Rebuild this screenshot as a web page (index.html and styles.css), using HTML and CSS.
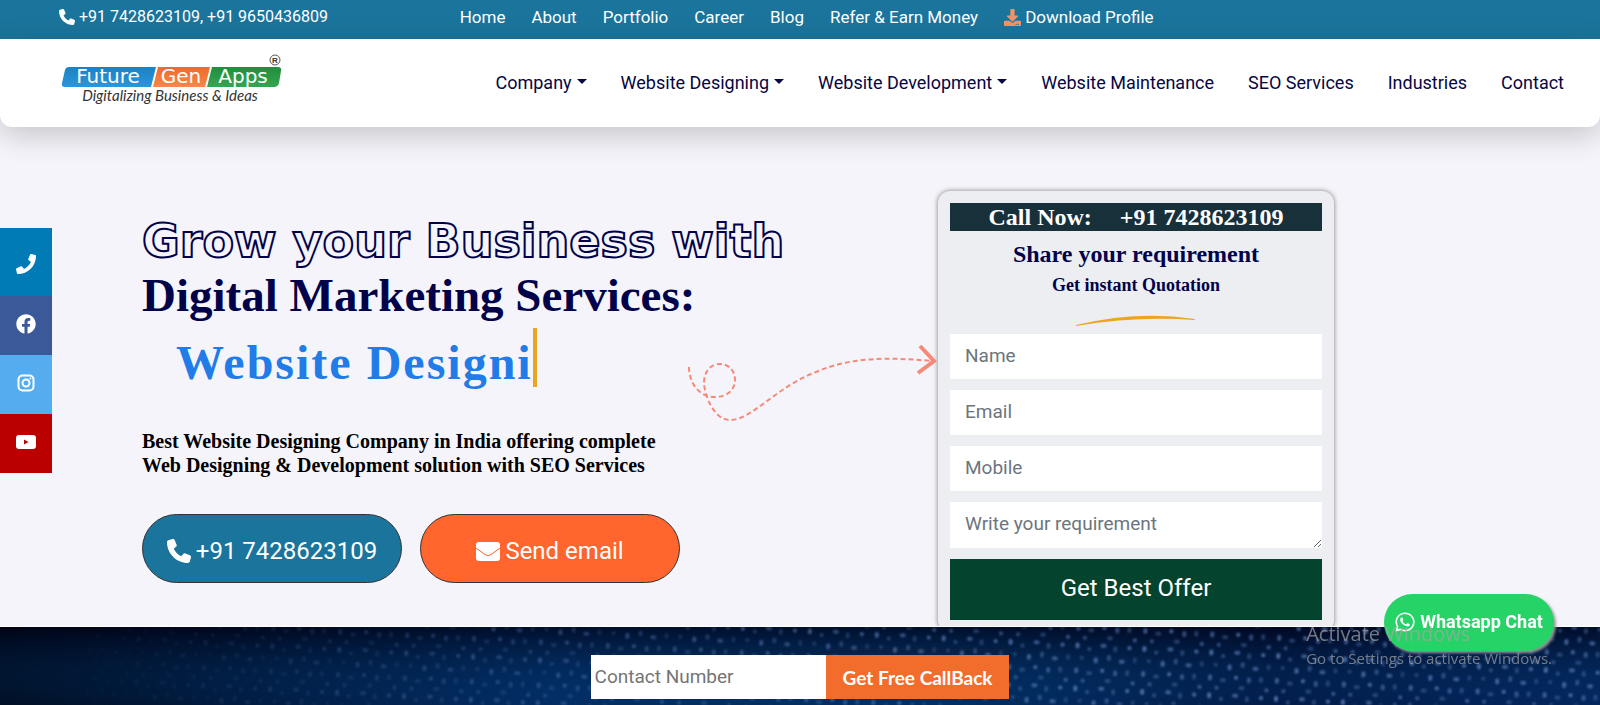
FILE: index.html
```html
<!DOCTYPE html>
<html lang="en">
<head>
  <meta charset="UTF-8">
  <meta name="viewport" content="width=device-width, initial-scale=1.0">
  <title>Future Gen Apps</title>
  <link rel="stylesheet" href="styles.css">
</head>
<body>
  <!-- shared icons -->
  <svg class="sprite" aria-hidden="true">
    <symbol id="phone" viewBox="0 0 512 512"><path d="M164.9 24.6c-7.7-18.6-28-28.5-47.4-23.2l-88 24C12.1 30.2 0 46 0 64C0 311.4 200.6 512 448 512c18 0 33.8-12.1 38.6-29.5l24-88c5.3-19.4-4.6-39.7-23.2-47.4l-96-40c-16.3-6.8-35.2-2.1-46.3 11.6L304.7 368C234.3 334.7 177.3 277.7 144 207.3L193.3 167c13.7-11.2 18.4-30 11.6-46.3l-40-96z"/></symbol>
  </svg>

  <div class="topbar">
    <a class="topbar-phone" href="#"><svg class="icon" aria-hidden="true"><use href="#phone"/></svg> +91 7428623109, +91 9650436809</a>
    <nav class="topbar-links">
      <a href="#">Home</a>
      <a href="#">About</a>
      <a href="#">Portfolio</a>
      <a href="#">Career</a>
      <a href="#">Blog</a>
      <a href="#">Refer &amp; Earn Money</a>
      <a href="#"><svg class="icon icon-download" viewBox="0 0 512 512" aria-hidden="true"><path d="M216 0h80c13.3 0 24 10.7 24 24v168h87.7c17.8 0 26.7 21.5 14.1 34.1L269.7 378.3c-7.5 7.5-19.8 7.5-27.3 0L90.1 226.1c-12.6-12.6-3.7-34.1 14.1-34.1H192V24c0-13.3 10.7-24 24-24zm296 376v112c0 13.3-10.7 24-24 24H24c-13.3 0-24-10.7-24-24V376c0-13.3 10.7-24 24-24h146.7l49 49c20.1 20.1 52.5 20.1 72.6 0l49-49H488c13.3 0 24 10.7 24 24zm-124 88c0-11-9-20-20-20s-20 9-20 20 9 20 20 20 20-9 20-20zm64 0c0-11-9-20-20-20s-20 9-20 20 9 20 20 20 20-9 20-20z"/></svg> Download Profile</a>
    </nav>
  </div>

  <header class="header">
    <a class="logo" href="#" aria-label="Future Gen Apps">
      <svg width="224" height="52" viewBox="0 0 224 52">
        <defs>
          <linearGradient id="blue" x1="0" y1="0" x2="0" y2="1"><stop offset="0" stop-color="#1a82c4"/><stop offset="1" stop-color="#2b96dc"/></linearGradient>
          <linearGradient id="orange" x1="0" y1="0" x2="0" y2="1"><stop offset="0" stop-color="#ee6a2c"/><stop offset="1" stop-color="#f9864a"/></linearGradient>
          <linearGradient id="green" x1="0" y1="0" x2="0" y2="1"><stop offset="0" stop-color="#1f8f3d"/><stop offset="1" stop-color="#35a552"/></linearGradient>
        </defs>
        <path fill="url(#blue)" d="M8 13H95L90 33H4Q0 33 1 29L4 16Q5 13 8 13Z"/>
        <path fill="url(#orange)" d="M97 13H149L144 33H92Z"/>
        <path fill="url(#green)" d="M151 13H217Q221 13 220 17L218 29Q217 33 213 33H146Z"/>
        <g class="logo-name">
          <text x="47" y="29">Future</text>
          <text x="120" y="29">Gen</text>
          <text x="182" y="29">Apps</text>
        </g>
        <circle cx="214" cy="6" r="5" fill="#fff" stroke="#555" stroke-width="1"/>
        <text class="logo-mark" x="214" y="9">R</text>
        <text class="logo-tagline" x="109" y="47">Digitalizing Business &amp; Ideas</text>
      </svg>
    </a>
    <nav class="menu">
      <a class="has-menu" href="#">Company</a>
      <a class="has-menu" href="#">Website Designing</a>
      <a class="has-menu" href="#">Website Development</a>
      <a href="#">Website Maintenance</a>
      <a href="#">SEO Services</a>
      <a href="#">Industries</a>
      <a href="#">Contact</a>
    </nav>
  </header>

  <main>
    <section class="hero">
      <div class="hero-text">
        <h1>
          <span class="outline">Grow your Business with</span>
          Digital Marketing Services:
        </h1>
        <div class="typed">Website Designi</div>
        <p>Best Website Designing Company in India offering complete<br>Web Designing &amp; Development solution with SEO Services</p>
        <div class="actions">
          <a class="pill pill-call" href="#"><svg class="icon" aria-hidden="true"><use href="#phone"/></svg> +91 7428623109</a>
          <a class="pill pill-mail" href="#"><svg class="icon" viewBox="0 0 24 24" aria-hidden="true"><rect x="0" y="3" width="24" height="19" rx="3"/><path fill="none" stroke="#ff652c" d="M0 9L9 15.500Q12 18 15 15.500L24 9"/></svg> Send email</a>
        </div>
      </div>

      <div class="card">
        <svg class="arrow" width="252" height="90" viewBox="0 0 252 90" fill="none" stroke="#f58a78" aria-hidden="true">
          <path stroke-width="2" stroke-dasharray="5 3" d="M3 27C3 43 13 57 29 57C42 57 49 49 49 40C49 30 42 24 34 24C25 24 18 31 18 43C19 58 29 80 44 80C66 80 90 47 130 32C165 17 200 17 246 21"/>
          <path stroke-width="4" d="M234 6L248 21L232 33"/>
        </svg>
        <form class="quote">
          <div class="call-now"><span>Call Now:</span><span>+91 7428623109</span></div>
          <h2>Share your requirement</h2>
          <h3>Get instant Quotation</h3>
          <svg class="swoosh" width="120" height="12" viewBox="0 0 120 12" aria-hidden="true"><path fill="#eda51f" d="M0 10Q62 -5 119 4L118 5Q60 1 0 11Z"/></svg>
          <input type="text" name="name" placeholder="Name" aria-label="Name">
          <input type="email" name="email" placeholder="Email" aria-label="Email">
          <input type="tel" name="mobile" placeholder="Mobile" aria-label="Mobile">
          <textarea name="requirement" placeholder="Write your requirement" aria-label="Write your requirement"></textarea>
          <button type="button">Get Best Offer</button>
        </form>
      </div>
    </section>

    <section class="callback">
      <svg class="callback-bg" aria-hidden="true">
        <defs>
          <linearGradient id="base" x1="0" y1="0" x2="1" y2="0">
            <stop offset="0" stop-color="#00030f"/>
            <stop offset="0.150" stop-color="#011130"/>
            <stop offset="0.350" stop-color="#03265a"/>
            <stop offset="0.600" stop-color="#032858"/>
            <stop offset="0.800" stop-color="#03123a"/>
            <stop offset="1" stop-color="#041f52"/>
          </linearGradient>
          <linearGradient id="shade" x1="0" y1="0" x2="0" y2="1">
            <stop offset="0" stop-color="#000418" stop-opacity="0.700"/>
            <stop offset="1" stop-color="#00539a" stop-opacity="0.150"/>
          </linearGradient>
          <linearGradient id="fade" x1="0" y1="0" x2="1" y2="0">
            <stop offset="0.030" stop-color="#000"/>
            <stop offset="0.300" stop-color="#888"/>
            <stop offset="0.700" stop-color="#fff"/>
          </linearGradient>
          <filter id="soft"><feGaussianBlur stdDeviation="1"/></filter>
          <pattern id="dots" width="67" height="43" patternUnits="userSpaceOnUse" patternTransform="rotate(3)">
            <g fill="#6d92cf">
              <ellipse cx="5" cy="5" rx="2" ry="3"/>
              <ellipse cx="17" cy="8" rx="2" ry="2" opacity="0.600"/>
              <ellipse cx="31" cy="4" rx="3" ry="2" opacity="0.800"/>
              <ellipse cx="43" cy="7" rx="2" ry="3" opacity="0.500"/>
              <ellipse cx="57" cy="5" rx="2" ry="2"/>
              <ellipse cx="10" cy="17" rx="2" ry="2" opacity="0.500"/>
              <ellipse cx="24" cy="19" rx="2" ry="3" opacity="0.900"/>
              <ellipse cx="37" cy="16" rx="2" ry="3" opacity="0.600"/>
              <ellipse cx="50" cy="19" rx="3" ry="2" opacity="0.800"/>
              <ellipse cx="63" cy="17" rx="2" ry="3" opacity="0.400"/>
              <ellipse cx="5" cy="30" rx="2" ry="3" opacity="0.800"/>
              <ellipse cx="18" cy="32" rx="3" ry="2" opacity="0.500"/>
              <ellipse cx="31" cy="29" rx="2" ry="2"/>
              <ellipse cx="44" cy="31" rx="2" ry="3" opacity="0.700"/>
              <ellipse cx="56" cy="30" rx="2" ry="3" opacity="0.500"/>
              <ellipse cx="12" cy="40" rx="2" ry="2" opacity="0.700"/>
              <ellipse cx="37" cy="39" rx="3" ry="2" opacity="0.500"/>
              <ellipse cx="62" cy="40" rx="2" ry="2" opacity="0.800"/>
            </g>
          </pattern>
          <mask id="fade-mask"><rect width="100%" height="100%" fill="url(#fade)"/></mask>
        </defs>
        <rect width="100%" height="100%" fill="url(#base)"/>
        <rect width="100%" height="100%" fill="url(#shade)"/>
        <g mask="url(#fade-mask)"><rect width="100%" height="100%" fill="url(#dots)" filter="url(#soft)" opacity="0.700"/></g>
      </svg>
      <form class="callback-form">
        <input type="tel" name="contact" placeholder="Contact Number" aria-label="Contact Number">
        <button type="button">Get Free CallBack</button>
      </form>
    </section>
  </main>

  <div class="social">
    <a class="social-phone" href="#" aria-label="Call"><svg class="icon" viewBox="0 0 512 512"><path d="M493.4 24.6l-104-24c-11.3-2.6-22.9 3.3-27.5 13.9l-48 112c-4.2 9.8-1.4 21.3 6.9 28l60.6 49.6c-36 76.7-98.9 140.5-177.2 177.2l-49.6-60.6c-6.8-8.3-18.2-11.1-28-6.9l-112 48C3.9 366.5-2 378.1.6 389.4l24 104C27.1 504.2 36.7 512 48 512c256.1 0 464-207.5 464-464 0-11.2-7.7-20.9-18.6-23.4z"/></svg></a>
    <a class="social-facebook" href="#" aria-label="Facebook"><svg class="icon" viewBox="0 0 512 512"><path d="M504 256C504 119 393 8 256 8S8 119 8 256c0 123.78 90.69 226.38 209.25 245V327.69h-63V256h63v-54.64c0-62.15 37-96.48 93.67-96.48 27.14 0 55.52 4.84 55.52 4.84v61h-31.28c-30.8 0-40.41 19.12-40.41 38.73V256h68.78l-11 71.69h-57.78V501C413.31 482.38 504 379.78 504 256z"/></svg></a>
    <a class="social-instagram" href="#" aria-label="Instagram"><svg class="icon" viewBox="0 0 20 20"><rect x="2.500" y="2.500" width="15" height="15" rx="4" fill="none" stroke="#fff" stroke-width="2"/><circle cx="10" cy="10" r="3.500" fill="none" stroke="#fff" stroke-width="2"/><circle cx="14.400" cy="5.600" r="1"/></svg></a>
    <a class="social-youtube" href="#" aria-label="YouTube"><svg class="icon" viewBox="0 0 20 20"><rect x="0" y="3" width="20" height="14" rx="3"/><path fill="#bb0000" d="M8 7.500L12.500 10L8 12.500Z"/></svg></a>
  </div>

  <a class="whatsapp" href="#"><svg class="icon" viewBox="0 0 448 512" aria-hidden="true"><path d="M380.9 97.1C339 55.1 283.2 32 223.9 32c-122.4 0-222 99.6-222 222 0 39.1 10.2 77.3 29.6 111L0 480l117.7-30.9c32.4 17.7 68.9 27 106.1 27h.1c122.3 0 224.1-99.6 224.1-222 0-59.3-25.2-115-67.1-157zm-157 341.6c-33.2 0-65.7-8.9-94-25.7l-6.7-4-69.8 18.3L72 359.2l-4.4-7c-18.5-29.4-28.2-63.3-28.2-98.2 0-101.7 82.8-184.5 184.6-184.5 49.3 0 95.6 19.2 130.4 54.1 34.8 34.9 56.2 81.2 56.1 130.5 0 101.8-84.9 184.6-186.6 184.6zm101.2-138.2c-5.5-2.8-32.8-16.2-37.9-18-5.1-1.9-8.8-2.8-12.5 2.8-3.7 5.6-14.3 18-17.6 21.8-3.2 3.7-6.5 4.2-12 1.4-32.6-16.3-54-29.1-75.5-66-5.7-9.8 5.7-9.1 16.3-30.3 1.8-3.7.9-6.9-.5-9.7-1.4-2.8-12.5-30.1-17.1-41.2-4.5-10.8-9.1-9.3-12.5-9.5-3.2-.2-6.9-.2-10.6-.2-3.7 0-9.7 1.4-14.8 6.9-5.1 5.6-19.4 19-19.4 46.3 0 27.3 19.9 53.7 22.6 57.4 2.8 3.7 39.1 59.7 94.8 83.8 35.2 15.2 49 16.5 66.6 13.9 10.7-1.6 32.8-13.4 37.4-26.4 4.6-13 4.6-24.1 3.2-26.4-1.3-2.5-5-3.9-10.5-6.6z"/></svg> Whatsapp Chat</a>

  <div class="activate">
    <div class="activate-title">Activate Windows</div>
    <div>Go to Settings to activate Windows.</div>
  </div>
</body>
</html>
```

FILE: styles.css
```css
* {
  box-sizing: border-box;
}

body {
  margin: 0;
  min-height: 100vh;
  display: flex;
  flex-direction: column;
  font-family: Roboto, "Liberation Sans", sans-serif;
  font-size: 17px;
  background: #f4f4fa;
}

a {
  color: inherit;
  text-decoration: none;
}

h1, h2, h3, p {
  margin: 0;
}

input, textarea, button {
  font-family: inherit;
  border: none;
  border-radius: 0;
  margin: 0;
  outline: none;
}

.icon {
  width: 1em;
  height: 1em;
  fill: #fff;
  flex: none;
}

.sprite {
  display: none;
}

/* Top bar */
.topbar {
  display: grid;
  grid-template-columns: 26% 1fr;
  padding: 6px 0 11px 59px;
  line-height: 22px;
  color: #fff;
  background: #1b749b;
}

.topbar a {
  display: flex;
  align-items: center;
  gap: 4px;
}

.topbar .topbar-phone {
  font-size: 16px;
}

.topbar-links {
  display: flex;
  gap: 26px;
}

.topbar .icon-download {
  fill: #f4935f;
}

/* Header */
.header {
  position: relative;
  z-index: 2;
  display: flex;
  justify-content: space-between;
  align-items: center;
  padding: 15px 36px 21px 61px;
  background: #fff;
  border-radius: 0 0 12px 12px;
  box-shadow: 0 8px 30px rgba(0, 0, 0, 0.2);
}

.logo svg {
  display: block;
}

.logo-name {
  font-family: "DejaVu Sans", sans-serif;
  font-size: 20px;
  fill: #fff;
  text-anchor: middle;
}

.logo-mark {
  font-family: "Liberation Sans", sans-serif;
  font-size: 8px;
  font-weight: bold;
  fill: #333;
  text-anchor: middle;
}

.logo-tagline {
  font-family: Lato, sans-serif;
  font-size: 15px;
  font-style: italic;
  fill: #333;
  text-anchor: middle;
}

.menu {
  display: flex;
  gap: 34px;
  padding-top: 4px;
  font-size: 18px;
  color: #060644;
}

.has-menu::after {
  content: '';
  display: inline-block;
  margin-left: 5px;
  vertical-align: 5px;
  border-top: 5px solid;
  border-left: 5px solid transparent;
  border-right: 5px solid transparent;
}

main {
  flex: 1;
  display: flex;
  flex-direction: column;
}

/* Hero */
.hero {
  display: grid;
  grid-template-columns: 1fr 396px;
  padding: 64px 266px 0 142px;
  overflow: hidden;
  border-bottom: 1px solid #fff;
}

.hero-text {
  padding-top: 23px;
}

.hero h1 {
  font-family: "Liberation Serif", serif;
  font-size: 47px;
  line-height: 54px;
  color: #02024a;
}

.outline {
  display: block;
  font-family: "DejaVu Sans", sans-serif;
  font-size: 46px;
  color: transparent;
  -webkit-text-stroke: 2px #02024a;
}

.typed {
  display: inline-block;
  margin: 6px 0 0 34px;
  padding-top: 11px;
  font-family: "Liberation Serif", serif;
  font-size: 48px;
  font-weight: bold;
  line-height: 48px;
  letter-spacing: 2px;
  color: #217ce8;
  border-right: 4px solid #e9a625;
}

.hero p {
  margin: 42px 0 37px;
  font-family: "Liberation Serif", serif;
  font-size: 20px;
  font-weight: bold;
  line-height: 24px;
  color: #000;
}

.actions {
  display: flex;
  gap: 18px;
}

.pill {
  display: flex;
  justify-content: center;
  align-items: center;
  gap: 5px;
  width: 260px;
  height: 69px;
  padding-top: 4px;
  font-size: 24px;
  color: #fff;
  border: 1px solid #333;
  border-radius: 35px;
}

.pill-call {
  background: #1b749b;
}

.pill-mail {
  background: #ff652c;
}

/* Quote form */
.card {
  position: relative;
  margin-bottom: -6px;
  padding: 12px;
  background: #eceef2;
  border-radius: 12px;
  box-shadow: 0 0 5px rgba(0, 0, 0, 0.5);
}

.arrow {
  position: absolute;
  left: -252px;
  top: 149px;
}

.quote {
  display: flex;
  flex-direction: column;
  font-family: "Liberation Serif", serif;
  text-align: center;
  color: #02024a;
}

.call-now {
  display: flex;
  justify-content: center;
  gap: 28px;
  font-size: 24px;
  font-weight: bold;
  line-height: 28px;
  color: #fff;
  background: #18303a;
}

.quote h2 {
  margin-top: 9px;
  font-size: 24px;
  line-height: 28px;
}

.quote h3 {
  margin-top: 5px;
  font-size: 18px;
  line-height: 24px;
}

.swoosh {
  margin: 18px auto 7px;
}

.quote input, .quote textarea {
  height: 45px;
  margin-bottom: 11px;
  padding: 0 15px 2px;
  font-family: Roboto, sans-serif;
  font-size: 19px;
  background: #fff;
}

.quote textarea {
  height: 46px;
  padding-top: 10px;
  line-height: 24px;
  resize: vertical;
}

.quote input::placeholder, .quote textarea::placeholder {
  color: #6c757d;
}

.quote button {
  height: 61px;
  padding-bottom: 4px;
  font-family: Roboto, sans-serif;
  font-size: 24px;
  color: #fff;
  background: #04432d;
}

/* Callback strip */
.callback {
  position: relative;
  flex: 1;
  padding-top: 28px;
  background: #021a44;
}

.callback-bg {
  position: absolute;
  inset: 0;
  width: 100%;
  height: 100%;
}

.callback-form {
  position: relative;
  display: flex;
  justify-content: center;
  height: 44px;
}

.callback-form input {
  width: 235px;
  padding: 0 4px 2px;
  font-size: 19px;
  background: #fff;
}

.callback-form button {
  padding: 0 17px;
  font-family: Lato, sans-serif;
  font-size: 19px;
  font-weight: bold;
  color: #fff;
  background: #f26d2b;
}

/* Floating items */
.social {
  position: fixed;
  left: 0;
  top: 228px;
  width: 52px;
  font-size: 20px;
}

.social a {
  display: flex;
  justify-content: center;
  align-items: center;
  height: 59px;
  padding-bottom: 4px;
}

.social .social-phone {
  height: 68px;
  padding: 4px 0 0;
  background: #007bb6;
}

.social-facebook {
  background: #3b5998;
}

.social-instagram {
  background: #55acee;
}

.social-youtube {
  background: #bb0000;
}

.whatsapp {
  position: fixed;
  right: 46px;
  bottom: 54px;
  z-index: 3;
  display: flex;
  justify-content: center;
  align-items: center;
  gap: 5px;
  width: 170px;
  height: 57px;
  padding-bottom: 2px;
  font-size: 18px;
  font-weight: bold;
  color: #fff;
  background: #25d366;
  border-radius: 29px;
  box-shadow: 2px 2px 3px #999;
}

.whatsapp .icon {
  width: 20px;
  height: 22px;
}

.activate {
  position: fixed;
  right: 48px;
  bottom: 36px;
  z-index: 4;
  font-family: "Open Sans", sans-serif;
  font-size: 15px;
  line-height: 22px;
  color: rgba(165, 165, 165, 0.7);
  pointer-events: none;
}

.activate-title {
  font-size: 20px;
  line-height: 26px;
}
```
